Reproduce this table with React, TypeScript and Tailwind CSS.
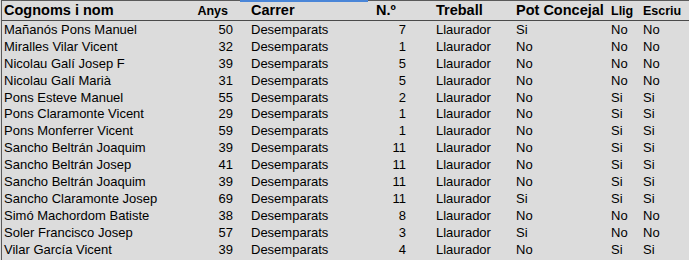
import React from 'react';

type Row = {
  nom: string;
  anys: number;
  carrer: string;
  num: number;
  treball: string;
  pot: string;
  llig: string;
  escriu: string;
};

const rows: Row[] = [
  { nom: 'Mañanós Pons Manuel', anys: 50, carrer: 'Desemparats', num: 7, treball: 'Llaurador', pot: 'Si', llig: 'No', escriu: 'No' },
  { nom: 'Miralles Vilar Vicent', anys: 32, carrer: 'Desemparats', num: 1, treball: 'Llaurador', pot: 'No', llig: 'No', escriu: 'No' },
  { nom: 'Nicolau Galí Josep F', anys: 39, carrer: 'Desemparats', num: 5, treball: 'Llaurador', pot: 'No', llig: 'No', escriu: 'No' },
  { nom: 'Nicolau Galí Marià', anys: 31, carrer: 'Desemparats', num: 5, treball: 'Llaurador', pot: 'No', llig: 'No', escriu: 'No' },
  { nom: 'Pons Esteve Manuel', anys: 55, carrer: 'Desemparats', num: 2, treball: 'Llaurador', pot: 'No', llig: 'Si', escriu: 'Si' },
  { nom: 'Pons Claramonte Vicent', anys: 29, carrer: 'Desemparats', num: 1, treball: 'Llaurador', pot: 'No', llig: 'Si', escriu: 'Si' },
  { nom: 'Pons Monferrer Vicent', anys: 59, carrer: 'Desemparats', num: 1, treball: 'Llaurador', pot: 'No', llig: 'Si', escriu: 'Si' },
  { nom: 'Sancho Beltrán Joaquim', anys: 39, carrer: 'Desemparats', num: 11, treball: 'Llaurador', pot: 'No', llig: 'Si', escriu: 'Si' },
  { nom: 'Sancho Beltrán Josep', anys: 41, carrer: 'Desemparats', num: 11, treball: 'Llaurador', pot: 'No', llig: 'Si', escriu: 'Si' },
  { nom: 'Sancho Beltrán Joaquim', anys: 39, carrer: 'Desemparats', num: 11, treball: 'Llaurador', pot: 'No', llig: 'Si', escriu: 'Si' },
  { nom: 'Sancho Claramonte Josep', anys: 69, carrer: 'Desemparats', num: 11, treball: 'Llaurador', pot: 'Si', llig: 'Si', escriu: 'Si' },
  { nom: 'Simó Machordom Batiste', anys: 38, carrer: 'Desemparats', num: 8, treball: 'Llaurador', pot: 'No', llig: 'No', escriu: 'No' },
  { nom: 'Soler Francisco Josep', anys: 57, carrer: 'Desemparats', num: 3, treball: 'Llaurador', pot: 'Si', llig: 'No', escriu: 'No' },
  { nom: 'Vilar García Vicent', anys: 39, carrer: 'Desemparats', num: 4, treball: 'Llaurador', pot: 'No', llig: 'Si', escriu: 'Si' },
];

// column grid shared by header and rows
const cols = 'grid grid-cols-[188px_57px_119px_66px_80px_95px_32px_1fr]';

export default function App() {
  return (
    <div className="w-[689px] h-[260px] bg-[#dcdcdc] text-black font-['Liberation_Sans',Arial,sans-serif] overflow-hidden">
      <div className="relative h-full border-t border-l border-[#5a5a5a] ml-[1px]">
        {/* selection hint over the Carrer column */}
        <div className="absolute -top-px left-[238px] w-[128px] h-[2px] bg-[#4a86d8]" />

        <div className={`${cols} h-[20px] items-center border-b border-[#4a4a4a] font-bold leading-none`}>
          <div className="pl-[2px] text-[14.5px]">Cognoms i nom</div>
          <div className="text-right pr-[19px] text-[12.5px] pt-[1px]">Anys</div>
          <div className="pl-[4px] text-[14.5px]">Carrer</div>
          <div className="pl-[10px] text-[14.5px]">N.º</div>
          <div className="pl-[4px] text-[14.5px]">Treball</div>
          <div className="pl-[4px] text-[14.5px]">Pot Concejal</div>
          <div className="pl-[4px] text-[12.5px] pt-[1px]">Llig</div>
          <div className="pl-[4px] text-[12.5px] pt-[1px]">Escriu</div>
        </div>

        <div className="text-[13px] leading-none">
          {rows.map((r, i) => (
            <div key={i} className={`${cols} h-[16.9px] items-center`}>
              <div className="pl-[2px] whitespace-nowrap">{r.nom}</div>
              <div className="text-right pr-[14px]">{r.anys}</div>
              <div className="pl-[4px]">{r.carrer}</div>
              <div className="text-right pr-[26px]">{r.num}</div>
              <div className="pl-[4px]">{r.treball}</div>
              <div className="pl-[4px]">{r.pot}</div>
              <div className="pl-[4px]">{r.llig}</div>
              <div className="pl-[4px]">{r.escriu}</div>
            </div>
          ))}
        </div>
      </div>
    </div>
  );
}
